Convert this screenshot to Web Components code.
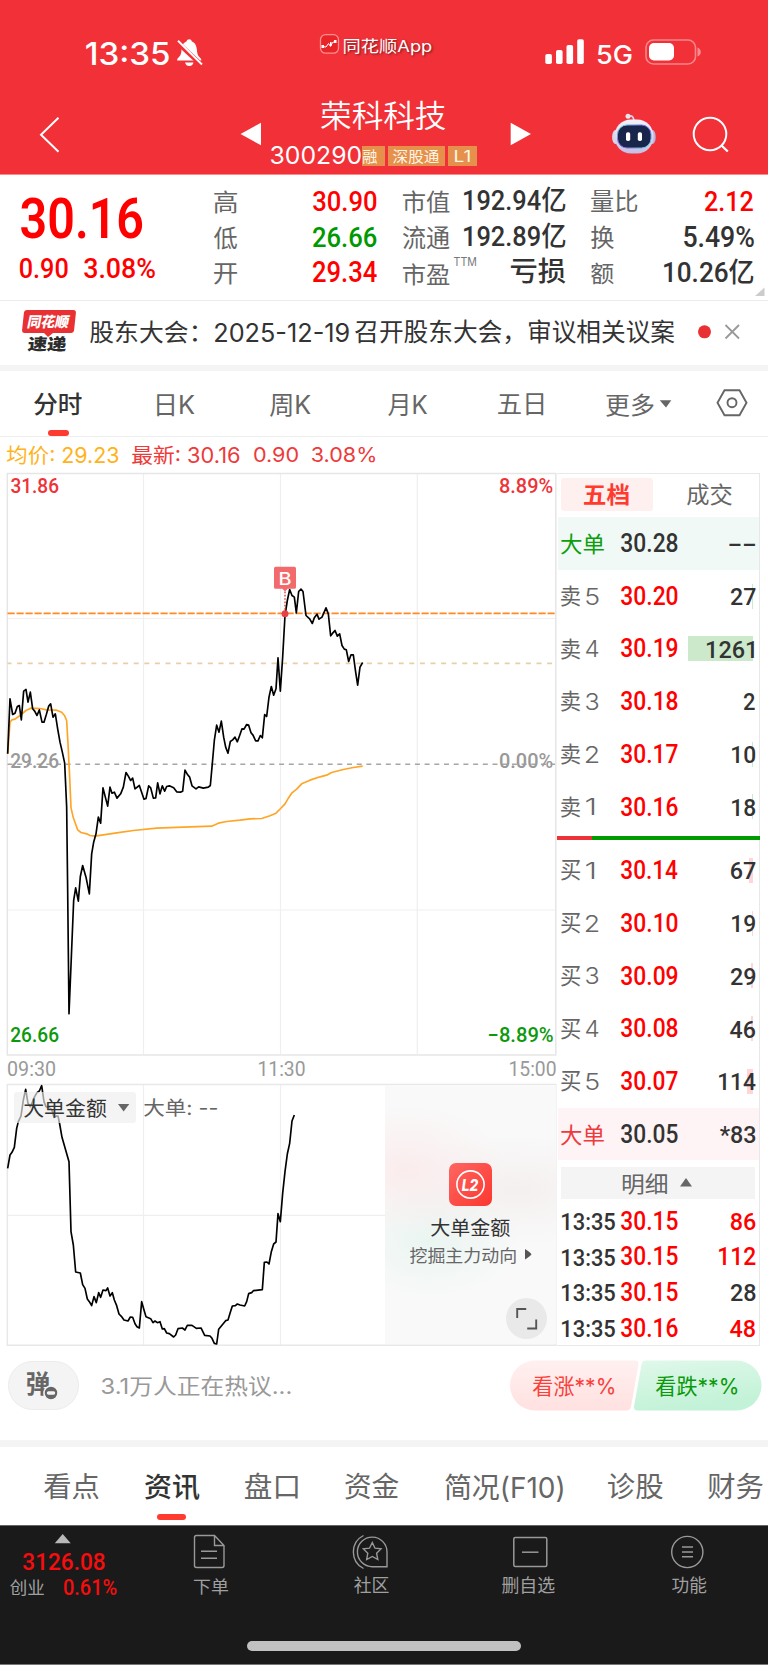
<!DOCTYPE html>
<html lang="zh-CN">
<head>
<meta charset="utf-8">
<title>荣科科技 300290</title>
<style>
html,body{margin:0;padding:0}
body{width:768px;height:1665px;overflow:hidden;background:#fff;color:#333;font-family:Inter,"Noto Sans CJK SC",sans-serif}
</style>
</head>
<body>
<stock-page></stock-page>
<script>
const ctx = document.createElement('canvas').getContext('2d');

/* Text whose glyphs fill a box of exactly w by h pixels. */
class InkText extends HTMLElement {
  constructor() {
    super();
    this.attachShadow({mode: 'open'}).innerHTML = `<style>
      :host{display:block;flex:none;overflow:visible}
      :host([kind=din]){font-family:Roboto,"Noto Sans CJK SC",sans-serif;font-weight:500}
      span{display:block;width:max-content;white-space:pre;transform-origin:0 0}
    </style><span><slot></slot></span>`;
  }
  connectedCallback() {
    const w = +this.getAttribute('w'), h = +this.getAttribute('h');
    const cs = getComputedStyle(this), s = this.textContent;
    ctx.font = `${cs.fontStyle} ${cs.fontWeight} 100px ${cs.fontFamily}`;
    const m = ctx.measureText(s);
    const v = ctx.measureText(this.getAttribute('ref') || s);
    const fs = h * 100 / (v.actualBoundingBoxAscent + v.actualBoundingBoxDescent);
    const k = fs / 100;
    const sx = w / ((m.actualBoundingBoxLeft + m.actualBoundingBoxRight) * k);
    const asc = Math.round(m.fontBoundingBoxAscent * k), desc = Math.round(m.fontBoundingBoxDescent * k);
    const top = v.actualBoundingBoxAscent * k - asc;
    this.style.width = w + 'px';
    this.style.height = h + 'px';
    const sp = this.shadowRoot.querySelector('span');
    sp.style.fontSize = fs + 'px';
    sp.style.lineHeight = (asc + desc) + 'px';
    sp.style.transform = `translate(${m.actualBoundingBoxLeft * k * sx}px,${top}px) scaleX(${sx})`;
  }
}
customElements.define('ink-text', InkText);

/* item builders: each item knows its left edge, top and right edge inside the line */
const T = (x, y, x2, y2, s, style = '', kind = '') => ({x, y: y + .5, x2, html: m =>
  `<ink-text ${kind ? `kind="${kind}"` : ''} w="${(x2 - x).toFixed(2)}" h="${(y2 - y).toFixed(2)}" style="margin:${m};${style}">${s}</ink-text>`});
const D = (x, y, x2, y2, s, style = '') => T(x, y, x2, y2, s, style, 'din');
const S = (x, y, x2, y2, body) => ({x, y, x2, html: m =>
  `<svg width="${x2 - x}" height="${y2 - y}" viewBox="${x} ${y} ${x2 - x} ${y2 - y}" style="margin:${m}">${body}</svg>`});
const line = (ox, oy, h, items) => {
  let c = ox;
  return `<div class="line" style="height:${h}px">` + items.map(i => {
    const m = `${(i.y - oy).toFixed(2)}px 0 0 ${(i.x - c).toFixed(2)}px`; c = i.x2; return i.html(m);
  }).join('') + '</div>';
};
const BASE = `*{box-sizing:border-box}.line{display:flex;align-items:flex-start}svg{display:block;flex:none;overflow:visible}`;
const define = (name, css, html) => customElements.define(name, class extends HTMLElement {
  constructor() { super(); this.attachShadow({mode: 'open'}).innerHTML = `<style>${BASE}:host{display:block}${css}</style>${html}`; }
});

define('status-bar', ':host{height:88px;color:#fff}', line(0, 0, 88, [
  T(86, 41, 169, 64.2, '13:35', 'font-weight:550'),
  S(176, 38, 203, 67, `<path fill="#fff" d="M177 60.5q0-1.6 1.8-3.2c2.2-2 2.4-4 2.7-7.5.4-4 1.8-7.2 5-8.3.4-1.6 1.5-2.3 2.7-2.3s2.3.7 2.7 2.3c3.2 1.1 4.6 4.3 5 8.3.3 3.5.5 5.500 2.700 7.500q1.800 1.600 1.800 3.200zM185 62.500h8.500q-1 3.600-4.200 3.600t-4.300-3.600z"/><path d="M177 42l24.500 23" stroke="#f23038" stroke-width="4.800"/><path d="M178 40.800L202 64.500" stroke="#fff" stroke-width="1.900"/>`),
  S(319, 33, 340, 55, `<rect x="320.500" y="34.700" width="18" height="18.500" rx="5" fill="#e92429" stroke="#ff8e91" stroke-width="1.300"/><path d="M322 46.500l4 .5 2.500-3.500 2 3 2-4 3-1" fill="none" stroke="#fff" stroke-width="1"/><path d="M321.500 45h2.500v3h-2.500zM334 40h2.500v3H334zM330 42h1.500v4H330z" fill="#fff"/>`),
  T(344, 37.5, 431.5, 54.7, '同花顺App', 'text-shadow:1px 1px 2px #7a1b1f'),
  S(545, 39, 585, 64, `<g fill="#fff"><rect x="545.300" y="54" width="6.600" height="10" rx="1.800"/><rect x="556" y="50" width="6.600" height="14" rx="1.800"/><rect x="566.500" y="45" width="6.600" height="19" rx="1.800"/><rect x="577.200" y="39.300" width="6.600" height="24.700" rx="1.800"/></g>`),
  T(598, 44, 631.5, 63.3, '5G', 'font-weight:450'),
  S(645, 39, 701, 65, `<rect x="646" y="40" width="49.500" height="24" rx="7.500" fill="none" stroke="#fff" stroke-opacity=".42" stroke-width="1.600"/><rect x="649" y="43" width="25" height="17.500" rx="5" fill="#fff"/><path d="M697.500 47.500q3.300 1.500 3.300 4.500t-3.300 4.500z" fill="#fff" opacity=".45"/>`)
]));

define('stock-tag', ':host{flex:none;height:19.5px;background:#e5904b;color:#fff6e6}', '<slot></slot>');

define('nav-bar', `:host{height:86px;color:#fff;display:flex}.mid{width:250.5px}.side{flex:none}
  .tags{display:flex;margin-top:15px;padding-left:9.700px}stock-tag{display:block}`,
  `<div class="side" style="width:261px">${line(0, 88, 86, [
    S(40, 117, 60, 153, '<path d="M58.500 117.800L41 134.700l17.500 17" fill="none" stroke="#fff" stroke-width="2"/>'),
    S(240, 122, 261, 146, '<path d="M240.500 134L261 122.800v22.400z" fill="#fff"/>')])}</div>
  <div class="mid">
    <ink-text w="124.5" h="29.3" style="margin:14.100px 0 0 60.300px;font-weight:350">荣科科技</ink-text>
    <div class="tags"><ink-text w="90" h="18.3">300290</ink-text>
      <stock-tag style="width:22.500px;margin-left:1.800px;padding:3px 0 0 .5px"><ink-text w="14" h="14">融</ink-text></stock-tag>
      <stock-tag style="width:57px;margin-left:3px;padding:3px 0 0 5.300px"><ink-text w="46" h="14">深股通</ink-text></stock-tag>
      <stock-tag style="width:28.700px;margin-left:3.500px;padding:4px 0 0 6.300px"><ink-text w="14.500" h="11.500">L1</ink-text></stock-tag></div>
  </div>
  <div class="side">${line(511.5, 88, 86, [
    S(511, 122, 532, 146, '<path d="M531 134L510.700 122.800v22.400z" fill="#fff"/>'),
    S(611, 113, 657, 155, `<defs><linearGradient id="h" x1="0" y1="0" x2="0" y2="1"><stop offset="0" stop-color="#f4f3fb"/><stop offset="1" stop-color="#c3bfe5"/></linearGradient><linearGradient id="v" x1="0" y1="1" x2="1" y2="0"><stop offset="0" stop-color="#9b48dd"/><stop offset=".5" stop-color="#6dd9da"/><stop offset="1" stop-color="#704ee9"/></linearGradient></defs>
      <path d="M629 116q5-1 5 6" stroke="#d3d1e5" stroke-width="1.800" fill="none"/><circle cx="628" cy="116.300" r="2.500" fill="#e6e5ef"/><ellipse cx="615.500" cy="137" rx="3.400" ry="7" fill="#d7d6ed"/><ellipse cx="652.500" cy="137" rx="3.200" ry="7" fill="#b9b6df"/><rect x="614.500" y="119.500" width="39" height="34" rx="16.500" fill="url(#h)"/><rect x="617.500" y="125" width="33.500" height="23" rx="9.500" fill="#19264b" stroke="url(#v)" stroke-width="1"/><rect x="626" y="132.300" width="4.200" height="8.700" rx="1.800" fill="#fff"/><rect x="637.800" y="132.300" width="4.200" height="8.700" rx="1.800" fill="#fff"/>`),
    S(692, 116, 729, 153, '<circle cx="710" cy="134" r="16.300" fill="none" stroke="#fff" stroke-width="2"/><path d="M721.500 145.500l6.300 6" stroke="#fff" stroke-width="2.300"/>')])}</div>`);

const L = 'color:#666', K = 'color:#333', R = 'color:#f00', G = 'color:#009900';
define('quote-summary', ':host{height:126px;display:flex;border-bottom:1.500px solid #ececec}.a{width:200px}.b{width:568px}', `
  <div class="a">${line(0, 175, 75, [D(20.5, 197.7, 142, 238.3, '30.16', R + ';font-weight:600')])}${line(0, 250, 40, [D(19.5, 258.3, 67, 279, '0.90', R), D(84, 258.3, 155, 279, '3.08%', R)])}</div>
  <div class="b">${line(200, 175, 43, [T(214, 190.7, 237, 213.3, '高', L), D(313, 190, 376.3, 211, '30.90', R), T(403, 190.5, 449.5, 213, '市值', L), D(464, 188.3, 565.3, 213.5, '192.94亿', K), T(591.5, 190.7, 638, 213, '量比', L), D(705.5, 190, 753.7, 211, '2.12', R)])}
  ${line(200, 218, 36, [T(214, 226.5, 237, 249, '低', L), D(313, 225.7, 376.3, 246.7, '26.66', G), T(403, 226, 449.5, 249, '流通', L), D(464, 223.8, 565.3, 249, '192.89亿', K), T(591.5, 226, 614.3, 249, '换', L), D(684, 225.8, 754, 247, '5.49%', K)])}
  ${line(200, 254, 45, [T(214, 263, 237, 284, '开', L), D(313, 260.7, 376.8, 282, '29.34', R), T(403, 264, 449.5, 285.5, '市盈', L), T(454, 257.7, 476, 265.8, 'TTM', 'color:#777'), T(510.7, 258, 565.3, 284, '亏损', K + ';font-weight:500'), T(591.5, 262, 614.3, 284, '额', L), D(664.5, 258, 754, 284, '10.26亿', K), S(755, 287, 765, 297, '<path d="M764.500 287.500v8.500H755z" fill="#ccc"/>')])}</div>`);

define('notice-bar', ':host{height:70px;border-bottom:6.500px solid #f4f4f4}.logo{flex:none;width:52px;margin:9px 0 0 23px}.logo>div{height:23px;background:#e93033;border-radius:3px;transform:skewX(-6deg)}.logo ink-text{transform:skewX(-6deg)}', `<div class="line">
  <div class="logo"><div><ink-text w="40.500" h="14" style="padding:4.500px 0 0 5.500px;color:#fff;font-weight:900">同花顺</ink-text></div>
  <svg width="10" height="4" style="margin-left:21px"><path d="M0 0h9L4 4z" fill="#e93033"/></svg>
  <ink-text w="38.500" h="16" style="margin:-.5px 0 0 5px;font-weight:800;color:#2c2c2c">速递</ink-text></div>
  ${line(75, 301, 62, [T(90, 320.7, 197, 343.3, '股东大会：'), T(215, 322.5, 349, 341.5, '2025-12-19'), T(354.5, 319.7, 674.3, 343.7, '召开股东大会，审议相关议案'),
  S(698, 325, 712, 339, '<circle cx="704.500" cy="331.800" r="6.500" fill="#e93033"/>'), S(725, 324, 740, 340, '<path d="M725.500 325l13.500 13.500M739 325l-13.500 13.500" stroke="#999" stroke-width="1.800"/>')])}</div>`);

define('period-tabs', ':host{height:66px;border-bottom:1.500px solid #eee;color:#666}i{display:block;width:21.500px;height:5.500px;border-radius:3px;background:#ff3b30;margin-left:47.500px}',
  line(0, 370.5, 59.5, [T(34.3, 392.8, 82, 415.5, '分时', 'color:#333;font-weight:500'), T(157, 393.5, 194.5, 415, '日K'), T(270, 393, 310.7, 415.3, '周K'), T(387.7, 393, 427, 415.3, '月K'), T(498.3, 393.3, 543.7, 414.7, '五日'), T(606.2, 393.3, 654, 415.3, '更多'),
  S(659, 399, 672, 408, '<path d="M659.700 400.300h11.600l-5.300 7.200z" fill="#666"/>'),
  S(716, 389, 748, 417, '<path d="M724.500 390.200h15l7 12.500-7 12.500h-15l-7-12.500z" fill="none" stroke="#666" stroke-width="1.900"/><circle cx="732" cy="402.700" r="4.500" fill="none" stroke="#666" stroke-width="1.900"/>')]) + '<i></i>');

define('price-legend', ':host{height:36px;color:#ee3a3a}', line(0, 437.5, 36, [T(7, 445, 118.3, 464.5, '均价: 29.23', 'color:#ffb31a'), T(132.500, 445, 240, 464.5, '最新: 30.16'), T(254, 447.3, 298, 462.5, '0.90'), T(312, 447, 375, 462.5, '3.08%')]));

const PRICE = '23,1150 30,985 38,1032 45,1028 52,1008 58,1005 64,1048 71,962 78,957 84,995 91,965 98,1015 104,1022 111,1035 118,1018 126,1055 132,1055 139,1032 146,1007 152,1000 159,1040 166,1030 173,1075 180,1115 187,1145 194,1178 200,1310 203,1560 207,1930 214,1760 221,1590 227,1552 235,1592 241,1518 248,1485 258,1520 268,1570 275,1450 281,1415 288,1390 295,1340 302,1358 309,1252 316,1280 323,1307 330,1250 336,1268 343,1265 351,1283 362,1270 370,1250 378,1206 385,1217 392,1230 398,1223 405,1255 418,1245 432,1286 438,1284 446,1246 452,1252 460,1283 467,1282 473,1237 480,1270 487,1246 494,1262 500,1248 508,1246 521,1252 530,1264 541,1265 548,1262 555,1199 563,1213 569,1220 576,1246 588,1255 596,1249 610,1253 625,1250 631,1245 636,1190 643,1110 650,1064 657,1085 664,1052 671,1100 677,1130 684,1148 691,1113 698,1108 705,1100 712,1114 719,1095 726,1075 732,1076 740,1062 746,1064 753,1087 759,1094 767,1111 774,1111 781,1095 787,1102 794,1032 800,1038 807,980 814,948 821,974 828,955 834,862 841,962 848,860 855,735 862,690 869,657 876,675 883,680 889,727 896,663 903,656 909,663 918,735 929,745 937,759 943,742 951,731 957,746 966,740 978,712 985,730 992,796 998,788 1005,780 1012,797 1019,790 1026,825 1033,836 1039,838 1046,873 1053,853 1060,853 1067,905 1073,944 1080,890 1088,876';
const AVG = '23,1150 30,1055 36,1048 45,1046 60,1035 78,1020 92,1013 120,1014 140,1018 170,1019 185,1025 194,1036 200,1050 204,1120 209,1220 213,1312 220,1342 233,1378 243,1386 260,1390 270,1395 285,1397 310,1393 350,1387 400,1380 470,1373 550,1370 635,1367 655,1358 680,1353 720,1349 750,1345 785,1344 810,1336 828,1328 842,1314 855,1300 865,1283 876,1267 890,1256 905,1240 930,1229 960,1219 980,1214 995,1206 1030,1197 1060,1191 1088,1187';
const FLOW = '23,325 30,285 36,277 43,262 50,205 55,185 63,168 70,120 77,88 84,130 91,140 98,125 104,110 111,98 118,93 125,77 132,125 138,140 146,142 155,148 162,172 170,168 174,168 179,192 186,232 207,305 213,515 220,555 227,636 241,639 248,674 255,685 262,717 268,725 275,737 282,710 289,728 296,698 302,712 309,690 318,692 323,684 330,708 337,698 343,720 350,737 357,762 364,769 372,780 384,783 391,771 398,772 405,791 411,800 418,804 425,725 432,750 438,770 452,776 459,788 465,783 472,788 480,785 487,807 493,806 500,819 508,821 521,831 527,825 534,806 547,804 555,810 562,796 576,796 589,805 603,804 614,826 630,828 636,835 643,850 650,852 656,808 664,798 677,782 684,780 691,757 697,738 706,737 712,732 720,735 734,738 740,725 746,701 755,698 760,692 787,689 793,607 801,606 807,612 814,575 821,552 828,546 834,461 841,485 848,400 855,335 862,282 869,250 876,183 883,165';

define('price-chart', `:host{height:584px;position:relative}svg{position:absolute;inset:0}
  .labels{position:absolute;inset:5.500px 4px 14px 4px;display:flex;flex-direction:column;justify-content:space-between}
  .labels div{display:flex;justify-content:space-between}.labels .m{padding-top:1.500px}.b{position:absolute;left:272.600px;top:99px;color:#fff}`,
  `<svg width="549" height="584" viewBox="7 472.500 549 584">
    <path d="M7 618H556M7 909.500H556M143.500 473V1054M280.500 473V1054M417.300 473V1054" stroke="#efefef" stroke-width="1.200"/>
    <path d="M7.300 1054.500V473H555.800V1054.500z" fill="none" stroke="#e6e6e6" stroke-width="1.500"/>
    <path d="M7.500 612.900H555" stroke="#ff8a26" stroke-width="1.800" stroke-dasharray="7.200 1.800"/>
    <path d="M7.500 662.900H555" stroke="#e7cfa9" stroke-width="1.600" stroke-dasharray="5 5.600" stroke-dashoffset="1"/>
    <path d="M7.500 763.800H555" stroke="#a6a6a6" stroke-width="1.600" stroke-dasharray="5 4.700"/>
    <g transform="translate(0 370) scale(.33333)" fill="none" stroke-linejoin="round">
      <polyline points="${AVG}" stroke="#ffa526" stroke-width="5"/><polyline points="${PRICE}" stroke="#000" stroke-width="5"/>
      <path d="M855 663V722" stroke="#e93033" stroke-width="4" stroke-dasharray="5 5"/><circle cx="855" cy="730" r="10.500" fill="#e94045"/>
      <path d="M827 589h56q5 0 5 5v56q0 5-5 5h-20l-8 8-8-8h-20q-5 0-5-5v-56q0-5 5-5z" fill="#f26a6c"/></g></svg>
  <div class="labels">
    <div><ink-text kind="din" w="47.300" h="15.300" style="color:#ee3338">31.86</ink-text><ink-text kind="din" w="52.500" h="15.300" style="color:#ee3338">8.89%</ink-text></div>
    <div class="m" style="color:#999"><ink-text kind="din" w="47.300" h="15.300">29.26</ink-text><ink-text kind="din" w="52.500" h="15.300">0.00%</ink-text></div>
    <div style="color:#0d990d"><ink-text kind="din" w="47.300" h="15.300">26.66</ink-text><ink-text kind="din" w="64" h="15.300">−8.89%</ink-text></div>
  </div><ink-text class="b" w="10.500" h="12.500" style="font-weight:500">B</ink-text>`);

define('time-axis', ':host{height:27.500px;padding:4.800px 1.500px 0 .5px;display:flex;justify-content:space-between;color:#999}ink-text{font-weight:450!important}',
  ['09:30', '11:30', '15:00'].map((s, i) => `<ink-text kind="din" w="${[47, 45.5, 45.5][i]}" h="15">${s}</ink-text>`).join(''));

define('flow-chart', `:host{height:261.500px;position:relative;display:flex;justify-content:flex-end}
  .plot{position:absolute;inset:0}
  .ctl{position:absolute;left:6.500px;top:7.500px;display:flex;align-items:flex-start}
  .pill{display:flex;width:122.500px;height:31.500px;background:rgba(238,238,238,.66);border-radius:3px;padding:7px 0 0 10.500px}
  .promo{position:relative;width:170.500px;height:259px;margin:1px 1px 0 0;background:radial-gradient(ellipse 100px 65px at 20px 85px,#fbe9eacc,transparent),radial-gradient(ellipse 90px 60px at 45px 155px,#e6f4efcc,transparent),radial-gradient(ellipse 130px 55px at 130px 105px,#f3ebebb0,transparent),#f9f9f9;display:flex;flex-direction:column;align-items:center;padding-top:78.200px}
  .exp{position:absolute;right:9px;bottom:5px}.go{display:flex;margin-top:9.500px;padding-left:1px}`,
  `<svg class="plot" width="549" height="262" viewBox="7 1084 549 262">
    <path d="M7 1215.300H556M143.500 1085V1345M280.500 1085V1345" stroke="#efefef" stroke-width="1.200"/>
    <path d="M7.300 1345.300V1084.600H555.800V1345.300z" fill="none" stroke="#e8e8e8" stroke-width="1.500"/>
    <polyline transform="translate(0 1060) scale(.33333)" points="${FLOW}" fill="none" stroke="#000" stroke-width="5" stroke-linejoin="round"/></svg>
  <div class="ctl"><div class="pill"><ink-text w="82.500" h="19.500">大单金额</ink-text><svg width="12" height="8" style="margin:5.500px 0 0 11px"><path d="M0 0h11.300L5.600 7.500z" fill="#666"/></svg></div>
    <ink-text w="73" h="18.500" style="margin:6.500px 0 0 8px;color:#666">大单: --</ink-text></div>
  <div class="promo">
    <svg width="43" height="43"><defs><linearGradient id="g" x1="0" y1="0" x2="1" y2="1"><stop stop-color="#ff6662"/><stop offset="1" stop-color="#fb372f"/></linearGradient></defs><rect width="43" height="43" rx="7" fill="url(#g)"/><circle cx="21.500" cy="21.500" r="13.600" fill="none" stroke="#fff" stroke-width="1.600"/></svg>
    <ink-text w="16.500" h="12" style="margin:-27.500px 0 15.500px;color:#fff;font-weight:800;font-style:italic">L2</ink-text>
    <ink-text w="79" h="18.700" style="margin-top:12.300px">大单金额</ink-text>
    <div class="go"><ink-text w="105.500" h="16.500" style="color:#666">挖掘主力动向</ink-text><svg width="7" height="11" style="margin:2.500px 0 0 9px"><path d="M0 0q6 4 6.500 5.300Q6 6.500 0 10.500z" fill="#555"/></svg></div>
    <svg class="exp" width="41" height="41"><circle cx="20.500" cy="20.500" r="20.500" fill="#e9e9e9"/><path d="M11.200 20v-9h9M30.200 21.500v9h-9" fill="none" stroke="#555" stroke-width="1.900"/></svg>
  </div>`);

/* One level of the order book: label, price, quantity and a depth bar behind it. */
customElements.define('book-row', class extends HTMLElement {
  constructor() {
    super();
    const a = n => this.getAttribute(n);
    const [n, k] = [a('side'), a('level')], big = n === '大单';
    const c = a('c') || '#666';
    this.attachShadow({mode: 'open'}).innerHTML = `<style>${BASE}:host{display:flex;position:relative;height:52.700px;align-items:center;padding:0 4px 0 3.500px;background:${a('bg') || 'none'}}
      .n{width:60.300px;display:flex;align-items:center;color:${c}}.q{margin-left:auto;position:relative}
      .bar{position:absolute;right:6.500px;top:14px;height:25px;width:${a('bar') || 0}px;background:${a('barc') || '#cceacb'}}</style>
      <div class="bar"></div><div class="n">${big ? '<ink-text w="43" h="20.500">大单</ink-text>' : `<ink-text w="19" h="20">${n}</ink-text><ink-text w="${k === '1' ? 8 : 12.3}" h="17" style="margin-left:6px;font-weight:350">${k}</ink-text>`}</div>
      <ink-text kind="din" w="56.500" h="18.500" style="color:${big ? '#333' : '#f00'}">${a('p')}</ink-text>
      <ink-text class="q" kind="din" ref="0" w="${a('w')}" h="18" style="color:#333;${a('q') === '1261' ? 'margin-right:1.500px' : ''}">${a('q')}</ink-text>`;
  }
});
const row = (side, level, p, q, w, bar = 0, barc = '#cceacb', extra = '') => `<book-row side="${side}" level="${level}" p="${p}" q="${q}" w="${w}" bar="${bar}" barc="${barc}" ${extra}></book-row>`;
const P = '#ffd5d7';

define('order-book', `:host{width:203.800px;height:873px;border:1.300px solid #e8e8e8;border-left:0;padding-left:1px}
  .tabs{display:flex;height:43.500px;padding:4.200px 0 0 3.500px}.on{width:91.500px;height:33.500px;border-radius:3px;background:#fff0f0;padding:6px 0 0 23px}
  .split{height:3.700px;margin:2.900px -1px 4.400px;background:linear-gradient(90deg,#ee3338 35px,#009b00 35px)}
  .more{display:flex;height:32.500px;background:#f4f4f4;margin:6.500px 4.500px 3.800px 3px;padding:6px 0 0 62px;color:#666}
  .tick{display:flex;height:35.700px;align-items:center;padding:0 4px 0 4px;color:#333}`,
  `<div class="tabs"><div class="on"><ink-text w="45" h="21.500" style="color:#ff3b30;font-weight:700">五档</ink-text></div><ink-text w="45" h="21.500" style="margin:6px 0 0 34.500px;color:#666">成交</ink-text></div>
  ${row('大单', '', '30.28', '--', 26, 0, '', 'bg="#f1f9f6" c="#0b9f0b"')}
  ${row('卖', 5, '30.20', 27, 24.5, 1)}${row('卖', 4, '30.19', 1261, 47, 65)}${row('卖', 3, '30.18', 2, 11)}${row('卖', 2, '30.17', 10, 23, .5)}${row('卖', 1, '30.16', 18, 23, .8)}
  <div class="split"></div>
  ${row('买', 1, '30.14', 67, 24.5, 3.5, P)}${row('买', 2, '30.10', 19, 23, 1, P)}${row('买', 3, '30.09', 29, 24.5, 1.5, P)}${row('买', 4, '30.08', 46, 25, 2.2, P)}${row('买', 5, '30.07', 114, 36.5, 6, P)}
  ${row('大单', '', '30.05', '*83', 35.5, 0, '', 'bg="#fff4f5" c="#ee3a3d"')}
  <div class="more"><ink-text w="44" h="21">明细</ink-text><svg width="12" height="9" style="margin:5px 0 0 13.500px"><path d="M0 8.500h12L6 0z" fill="#666"/></svg></div>
  ${[['30.15', 86, 24.5], ['30.15', 112, 36.5], ['30.15', 28, 24.5], ['30.16', 48, 25]].map(([p, q, w]) => `<div class="tick"><ink-text kind="din" w="53" h="18" style="font-weight:500">13:35</ink-text><ink-text kind="din" w="56.500" h="18.500" style="margin-left:6.500px;color:#f00">${p}</ink-text><ink-text kind="din" w="${w}" h="18.300" style="margin-left:auto;color:${q === 28 ? '#333' : '#f00'}">${q}</ink-text></div>`).join('')}`);

define('market-area', ':host{height:873px;display:flex;padding-left:7px}.l{width:549.500px;flex:none}',
  '<div class="l"><price-chart></price-chart><time-axis></time-axis><flow-chart></flow-chart></div><order-book></order-book>');

define('comment-bar', `:host{height:101px;border-bottom:7px solid #f4f4f4;display:flex;align-items:flex-start;padding:14px 0 0 7.500px}
  .pill{position:relative;flex:none;width:71px;height:49.500px;margin-top:1px;border-radius:25px;background:#f4f4f4;border:1.200px solid #ececec;padding:9.500px 0 0 18.500px}
  .pill svg{position:absolute;left:34.500px;top:23px}
  .votes{position:relative;flex:none;width:253px;height:50.500px;display:flex;padding:16.300px 0 0 24px;gap:42px;margin-left:218px}
  .votes svg{position:absolute;left:0;top:0}.votes ink-text{position:relative}`,
  `<div class="pill"><ink-text w="22.500" h="24" style="font-weight:700;color:#666">弹</ink-text>
    <svg width="16" height="16"><circle cx="8" cy="8" r="7" fill="#666" stroke="#f4f4f4" stroke-width="1.500"/><rect x="3.800" y="6.300" width="8.400" height="3.400" rx="1.700" fill="#f4f4f4"/></svg></div>
  <ink-text w="188.500" h="20.400" style="margin:16px 0 0 23.500px;color:#999">3.1万人正在热议...</ink-text>
  <div class="votes"><svg width="253" height="51" viewBox="508 1360 253 51"><defs><linearGradient id="r" x1="0" y1="0" x2="0" y2="1"><stop stop-color="#fff0f0"/><stop offset="1" stop-color="#ffe1e0"/></linearGradient><linearGradient id="n" x1="0" y1="0" x2=".3" y2="1"><stop stop-color="#e0f8ea"/><stop offset="1" stop-color="#c2f2d7"/></linearGradient></defs><path d="M534 1360.500h100q4 0 3.400 4l-7.400 42q-.8 4-4.500 4H534a25 25 0 0 1 0-50z" fill="url(#r)"/><path d="M645 1360.500h90.500a25 25 0 0 1 0 50H637q-4.500 0-4-4l7.500-42q.8-4 4.500-4z" fill="url(#n)"/></svg>
    <ink-text w="81" h="20" style="color:#fb403b">看涨**%</ink-text><ink-text w="81" h="20" style="color:#0b990b">看跌**%</ink-text></div>`);

define('info-tabs', ':host{height:78px;color:#666}i{display:block;width:29px;height:5.500px;border-radius:3px;background:#ff3b30;margin-left:157px}',
  line(0, 1447, 67.5, [T(44, 1472.8, 98.7, 1499.7, '看点'), T(145, 1472.8, 199.5, 1499.5, '资讯', 'color:#333;font-weight:500'), T(244.7, 1472.8, 297.3, 1499, '盘口'), T(345, 1472.8, 398.7, 1499.5, '资金'), T(444.7, 1472.5, 562.5, 1499.7, '简况(F10)'), T(608.5, 1472.8, 663.3, 1499.7, '诊股'), T(708, 1472.8, 763, 1499.7, '财务')]) + '<i></i>');

define('bottom-bar', ':host{height:140px;background:#1a1a1a;border-top:1px solid #666;border-bottom:1px solid #777;color:#a0a0a0;display:flex;flex-direction:column}.home{width:274px;height:9.500px;border-radius:5px;background:#c1c1c1;margin:32px auto 0}.top{display:flex;height:83.500px}.idx{width:150px}',
  `<div class="top"><div class="idx">${line(0, 1526, 21, [S(55, 1533, 71, 1544, '<path d="M62.700 1534l8 9.300H54.800z" fill="#b8b8b8"/>')])}${line(0, 1547, 27, [D(22.5, 1551.7, 104, 1569.7, '3126.08', 'color:#f60d0d')])}${line(0, 1574, 35, [T(9.7, 1581, 43.5, 1597, '创业'), D(64, 1580.3, 116.5, 1596, '0.61%', 'color:#f60d0d')])}</div>
  <div>${line(150, 1526, 45, [
    S(193, 1534, 225, 1569, '<g fill="none" stroke="#999" stroke-width="1.400"><path d="M214.500 1535.500h-18q-2 0-2 2v28q0 2 2 2h25.500q2 0 2-2v-20zM214.500 1535.500v10h9M201 1551.300h16M201 1558.300h16"/></g>'),
    S(351, 1534, 389, 1570, '<g fill="none" stroke="#999" stroke-width="1.400"><path d="M387 1566.700v-14.500a14.800 14.800 0 1 0-14.800 14.500zM363.500 1535.500A18.500 18.500 0 0 0 363.500 1568.500M372.300 1542.500l2.700 5.700 6 .7-4.400 4.300 1.200 6.300-5.500-3-5.600 3 1.100-6.300-4.400-4.300 6.100-.7z"/></g>'),
    S(512, 1536, 548, 1568, '<rect x="513.800" y="1537.500" width="33" height="29" rx="1.500" fill="none" stroke="#999" stroke-width="1.500"/><path d="M522 1552.200h16.500" stroke="#999" stroke-width="1.500"/>'),
    S(670, 1535, 704, 1569, '<circle cx="687.300" cy="1552" r="15.600" fill="none" stroke="#999" stroke-width="1.400"/><path d="M682 1547h11M682 1551.900h11M682 1556.800h11" stroke="#999" stroke-width="1.500"/>')])}
  ${line(150, 1571, 36, [T(194, 1577.7, 228, 1594, '下单'), T(354, 1577.3, 388.7, 1594, '社区'), T(502, 1577.3, 554.7, 1594, '删自选'), T(672, 1577.3, 706.3, 1594, '功能')])}</div></div><div class="home"></div>`);

define('stock-page', ':host{width:768px;height:1665px}header{height:174.500px;background:#f23038;border-bottom:.5px solid #f88}', `
  <header><status-bar></status-bar><nav-bar></nav-bar></header>
  <quote-summary></quote-summary><notice-bar></notice-bar><period-tabs></period-tabs><price-legend></price-legend>
  <market-area></market-area><comment-bar></comment-bar><info-tabs></info-tabs><bottom-bar></bottom-bar>`);
</script>
</body>
</html>
